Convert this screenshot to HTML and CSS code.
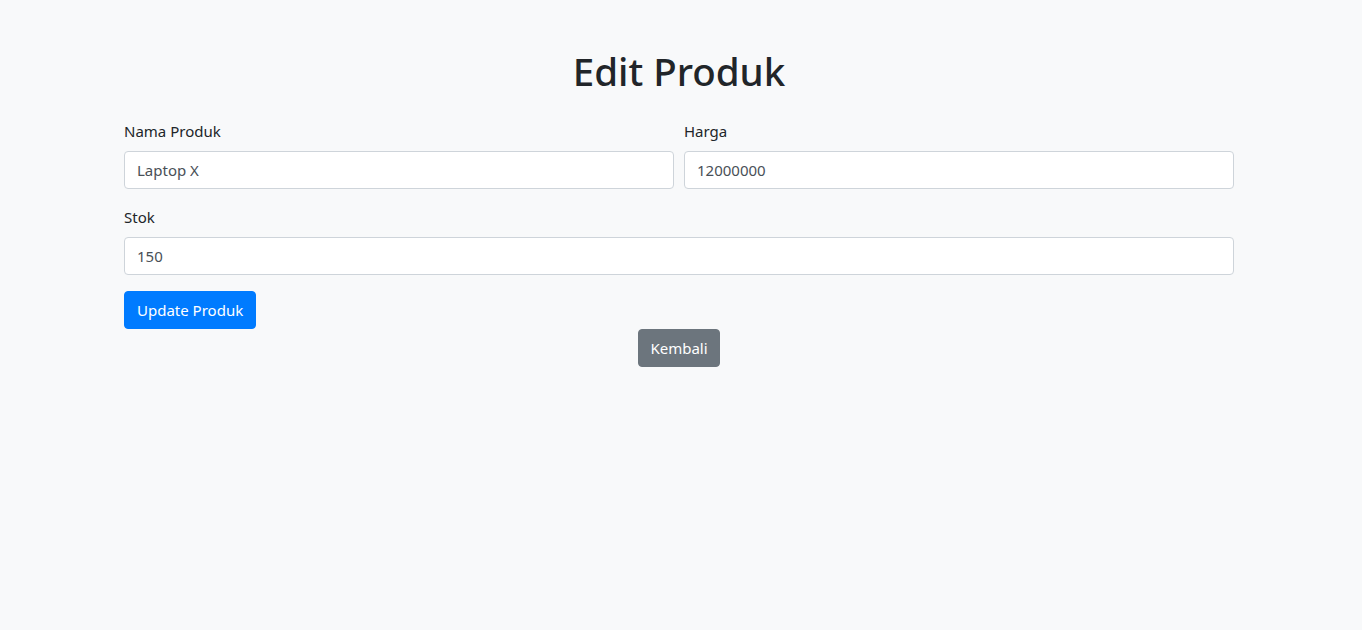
FILE: index.html
```html
<!DOCTYPE html>
<html lang="id">
<head>
<meta charset="utf-8">
<title>Edit Produk</title>
<link rel="stylesheet" href="styles.css">
</head>
<body>
<div class="container">
  <h1 class="title">Edit Produk</h1>
  <form class="form">
    <div class="form-row">
      <div class="form-group">
        <label class="label" for="nama">Nama Produk</label>
        <input class="input" id="nama" type="text" value="Laptop X">
      </div>
      <div class="form-group">
        <label class="label" for="harga">Harga</label>
        <input class="input" id="harga" type="text" value="12000000">
      </div>
    </div>
    <div class="form-group">
      <label class="label" for="stok">Stok</label>
      <input class="input" id="stok" type="text" value="150">
    </div>
    <div class="actions">
      <button type="button" class="btn btn-primary">Update Produk</button>
    </div>
  </form>
  <div class="center">
    <a class="btn btn-secondary" href="#">Kembali</a>
  </div>
</div>
</body>
</html>
```
FILE: styles.css
```css
* { box-sizing: border-box; }
html, body {
  margin: 0;
  padding: 0;
}
body {
  background: #f8f9fa;
  color: #212529;
  font-family: "Noto Sans", "Open Sans", "Liberation Sans", sans-serif;
  font-size: 16px;
  line-height: 24px;
}
.container {
  width: 1110px;
  margin: 0 auto;
  padding-top: 47px;
  position: relative;
  left: -2px;
}
.title {
  margin: 0 0 24px;
  font-size: 38.5px;
  line-height: 48px;
  font-weight: 500;
  text-align: center;
}
.form { margin: 0; }
.form-row {
  display: grid;
  grid-template-columns: 1fr 1fr;
  gap: 10px;
}
.form-group {
  margin-bottom: 16px;
}
.label {
  display: block;
  margin-bottom: 8px;
  font-size: 15px;
}
.input {
  display: block;
  width: 100%;
  height: 38px;
  padding: 6px 12px;
  font: inherit;
  font-size: 15px;
  color: #495057;
  background: #fff;
  border: 1px solid #ced4da;
  border-radius: 4px;
  outline: none;
}
.actions { display: flex; }
.btn {
  display: inline-block;
  height: 38px;
  padding: 6px 12px;
  font: inherit;
  font-size: 15px;
  line-height: 24px;
  border: 1px solid transparent;
  border-radius: 4px;
  color: #fff;
  text-decoration: none;
  cursor: pointer;
}
.btn-primary { background: #007bff; border-color: #007bff; }
.btn-secondary {
  background: #6c757d;
  border-color: #6c757d;
  padding: 6px 11px;
}
.center { text-align: center; }
```
